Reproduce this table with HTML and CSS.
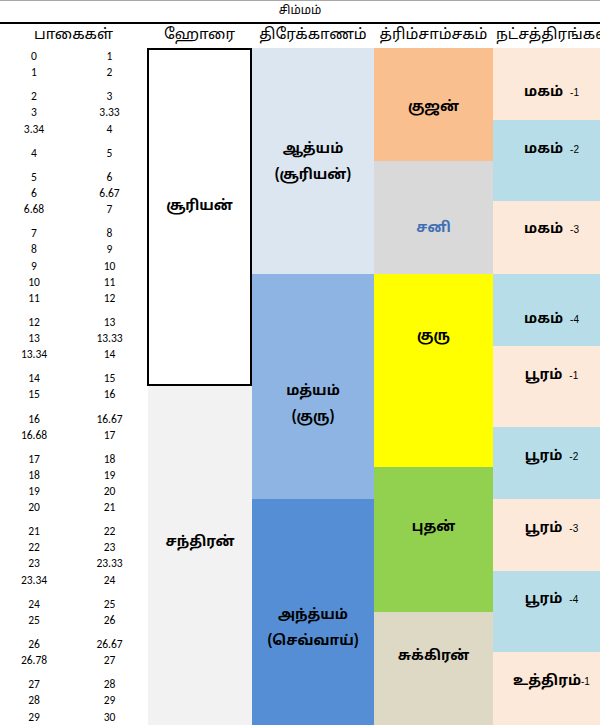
FILE: index.html
```html
<!DOCTYPE html>
<html lang="ta">
<head>
<meta charset="utf-8">
<title>சிம்மம்</title>
<link rel="stylesheet" href="styles.css">
</head>
<body>
<div class="sheet">
  <div class="title">சிம்மம்</div>
  <div class="heads">
    <div class="hd h-deg">பாகைகள்</div>
    <div class="hd h-hora">ஹோரை</div>
    <div class="hd h-drek">திரேக்காணம்</div>
    <div class="hd h-trim">த்ரிம்சாம்சகம்</div>
    <div class="hd h-nak">நட்சத்திரங்கள்</div>
  </div>
  <div class="grid">
    <div class="m hora-sun">சூரியன்</div>
    <div class="m hora-moon">சந்திரன்</div>

    <div class="m drek d1">ஆத்யம்<br>(சூரியன்)</div>
    <div class="m drek d2">மத்யம்<br>(குரு)</div>
    <div class="m drek d3">அந்த்யம்<br>(செவ்வாய்)</div>

    <div class="m t-kuja">குஜன்</div>
    <div class="m t-sani">சனி</div>
    <div class="m t-guru">குரு</div>
    <div class="m t-budha">புதன்</div>
    <div class="m t-sukra">சுக்கிரன்</div>

    <div class="m nk peach k1">மகம் <span class="pd">-1</span></div>
    <div class="m nk blue k2">மகம் <span class="pd">-2</span></div>
    <div class="m nk peach k3">மகம் <span class="pd">-3</span></div>
    <div class="m nk blue k4">மகம் <span class="pd">-4</span></div>
    <div class="m nk peach k5">பூரம் <span class="pd">-1</span></div>
    <div class="m nk blue k6">பூரம் <span class="pd">-2</span></div>
    <div class="m nk peach k7">பூரம் <span class="pd">-3</span></div>
    <div class="m nk blue k8">பூரம் <span class="pd">-4</span></div>
    <div class="m nk peach k9">உத்திரம்<span class="pd tight">-1</span></div>

    <div class="n a">0</div><div class="n b">1</div>
    <div class="n a">1</div><div class="n b">2</div>
    <div class="n a">2</div><div class="n b">3</div>
    <div class="n a">3</div><div class="n b">3.33</div>
    <div class="n a">3.34</div><div class="n b">4</div>
    <div class="n a">4</div><div class="n b">5</div>
    <div class="n a">5</div><div class="n b">6</div>
    <div class="n a">6</div><div class="n b">6.67</div>
    <div class="n a">6.68</div><div class="n b">7</div>
    <div class="n a">7</div><div class="n b">8</div>
    <div class="n a">8</div><div class="n b">9</div>
    <div class="n a">9</div><div class="n b">10</div>
    <div class="n a">10</div><div class="n b">11</div>
    <div class="n a">11</div><div class="n b">12</div>
    <div class="n a">12</div><div class="n b">13</div>
    <div class="n a">13</div><div class="n b">13.33</div>
    <div class="n a">13.34</div><div class="n b">14</div>
    <div class="n a">14</div><div class="n b">15</div>
    <div class="n a">15</div><div class="n b">16</div>
    <div class="n a">16</div><div class="n b">16.67</div>
    <div class="n a">16.68</div><div class="n b">17</div>
    <div class="n a">17</div><div class="n b">18</div>
    <div class="n a">18</div><div class="n b">19</div>
    <div class="n a">19</div><div class="n b">20</div>
    <div class="n a">20</div><div class="n b">21</div>
    <div class="n a">21</div><div class="n b">22</div>
    <div class="n a">22</div><div class="n b">23</div>
    <div class="n a">23</div><div class="n b">23.33</div>
    <div class="n a">23.34</div><div class="n b">24</div>
    <div class="n a">24</div><div class="n b">25</div>
    <div class="n a">25</div><div class="n b">26</div>
    <div class="n a">26</div><div class="n b">26.67</div>
    <div class="n a">26.78</div><div class="n b">27</div>
    <div class="n a">27</div><div class="n b">28</div>
    <div class="n a">28</div><div class="n b">29</div>
    <div class="n a">29</div><div class="n b">30</div>
  </div>
</div>
</body>
</html>
```

FILE: styles.css
```css
html, body {
  margin: 0;
  padding: 0;
  background: #ffffff;
}

body {
  width: 600px;
  height: 728px;
  overflow: hidden;
  color: #000000;
  font-family: "Latha", "Noto Sans Tamil", "Lohit Tamil", "Noto Sans", "DejaVu Sans", sans-serif;
}

.sheet {
  width: 600px;
}

.title {
  box-sizing: border-box;
  height: 24px;
  border-top: 1px solid #a8a8a8;
  border-bottom: 2px solid #000000;
  text-align: center;
  font-size: 12px;
  line-height: 21px;
}

.heads {
  display: grid;
  grid-template-columns: 147px 105px 122px 119px 107px;
  height: 24px;
}

.hd {
  font-size: 15px;
  line-height: 24px;
  text-align: center;
  white-space: nowrap;
  overflow: hidden;
}

.h-nak {
  text-align: left;
  padding-left: 3px;
}

.grid {
  display: grid;
  grid-template-columns: 72px 75px 105px 122px 119px 107px;
  grid-template-rows:
    16.1px 16.1px 24.2px 16.1px 16.1px 24.2px
    24.2px 16.1px 16.1px 24.2px 16.1px 16.1px
    16.1px 16.1px 24.2px 16.1px 16.1px 24.2px
    16.1px 24.2px 16.1px 24.2px 16.1px 16.1px
    16.1px 24.2px 16.1px 16.1px 16.1px 24.2px
    16.1px 24.2px 16.1px 24.2px 16.1px 16.1px;
}

/* degree numbers */
.n {
  display: flex;
  align-items: flex-end;
  justify-content: center;
  font-family: "Carlito", "Liberation Sans", Arial, sans-serif;
  font-size: 11.5px;
  line-height: 16px;
}

.n.a {
  grid-column: 1;
  padding-right: 4px;
}

.n.b {
  grid-column: 2;
}

/* merged cells */
.m {
  display: flex;
  flex-direction: column;
  align-items: center;
  box-sizing: border-box;
  overflow: hidden;
  font-size: 14px;
  font-weight: bold;
  line-height: 20px;
  text-align: center;
  white-space: nowrap;
}

.hora-sun {
  grid-column: 3;
  grid-row: 1 / 19;
  border: 2px solid #000000;
  padding-top: 147px;
}

.hora-moon {
  grid-column: 3;
  grid-row: 19 / 37;
  background: #f2f2f2;
  margin-left: 1px;
  padding-top: 147px;
}

.drek {
  grid-column: 4;
  line-height: 26px;
}

.d1 {
  grid-row: 1 / 13;
  background: #dce6f1;
  padding-top: 89px;
}

.d2 {
  grid-row: 13 / 25;
  background: #8db4e2;
  padding-top: 105px;
}

.d3 {
  grid-row: 25 / 37;
  background: #558ed5;
  padding-top: 104px;
}

.t-kuja {
  grid-column: 5;
  grid-row: 1 / 7;
  background: #fabf8f;
  padding-top: 50px;
}

.t-sani {
  grid-column: 5;
  grid-row: 7 / 13;
  background: #d9d9d9;
  color: #3f6fb5;
  padding-top: 58px;
}

.t-guru {
  grid-column: 5;
  grid-row: 13 / 23;
  background: #ffff00;
  padding-top: 53px;
}

.t-budha {
  grid-column: 5;
  grid-row: 23 / 31;
  background: #92d050;
  padding-top: 51px;
}

.t-sukra {
  grid-column: 5;
  grid-row: 31 / 37;
  background: #ddd9c4;
  padding-top: 35px;
}

.nk {
  grid-column: 6;
  flex-direction: row;
  justify-content: center;
  align-items: flex-start;
  padding-left: 10px;
}

.peach {
  background: #fde9d9;
}

.blue {
  background: #b7dee8;
}

.pd {
  font-family: "Liberation Sans", Arial, sans-serif;
  font-weight: normal;
  font-size: 10px;
  margin-left: 7px;
}

.pd.tight {
  margin-left: 0;
}

.k1 { grid-row: 1 / 5;   padding-top: 35px; }
.k2 { grid-row: 5 / 9;   padding-top: 20px; }
.k3 { grid-row: 9 / 13;  padding-top: 19px; }
.k4 { grid-row: 13 / 17; padding-top: 36px; }
.k5 { grid-row: 17 / 21; padding-top: 20px; }
.k6 { grid-row: 21 / 25; padding-top: 20px; }
.k7 { grid-row: 25 / 29; padding-top: 20px; }
.k8 { grid-row: 29 / 33; padding-top: 19px; }
.k9 { grid-row: 33 / 37; padding-top: 20px; }
```
